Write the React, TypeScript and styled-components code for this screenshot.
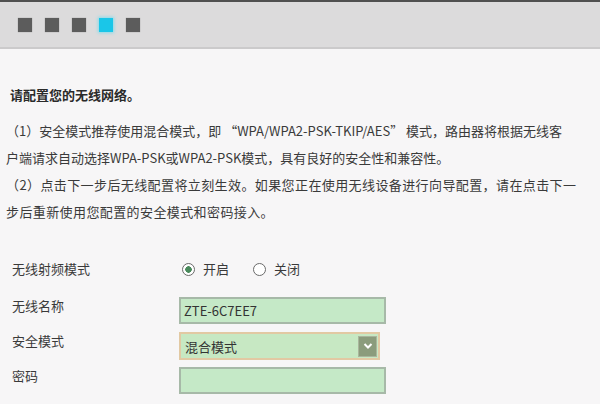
import React from 'react';
import styled, {createGlobalStyle} from 'styled-components';

const steps = [false, false, false, true, false];

const intro = [
	'（1）安全模式推荐使用混合模式，即 “WPA/WPA2-PSK-TKIP/AES” 模式，路由器将根据无线客',
	'户端请求自动选择WPA-PSK或WPA2-PSK模式，具有良好的安全性和兼容性。',
	'（2）点击下一步后无线配置将立刻生效。如果您正在使用无线设备进行向导配置，请在点击下一',
	'步后重新使用您配置的安全模式和密码接入。',
];

function Radio({checked, label}: {checked?: boolean; label: string}) {
	return (
		<RadioItem>
			<RadioDot checked={checked} />
			<span>{label}</span>
		</RadioItem>
	);
}

function App() {
	return (
		<>
			<GlobalStyle />
			<Page>
				<Header>
					{steps.map((active, i) => (
						<Step key={i} active={active} />
					))}
				</Header>
				<Content>
					<Heading>请配置您的无线网络。</Heading>
					<Intro>
						{intro.map((line, i) => (
							<Line key={i} wide={i > 1}>
								{line}
							</Line>
						))}
					</Intro>
					<Form>
						<Row height={24} gap={13}>
							<Label>无线射频模式</Label>
							<RadioGroup>
								<Radio checked label="开启" />
								<Radio label="关闭" />
							</RadioGroup>
						</Row>
						<Row height={27} gap={8}>
							<Label>无线名称</Label>
							<Input defaultValue="ZTE-6C7EE7" />
						</Row>
						<Row height={28} gap={7}>
							<Label>安全模式</Label>
							<Select>
								<span>混合模式</span>
								<DropButton>
									<svg width="10" height="8" viewBox="0 0 10 8">
										<path
											d="M1.5 2 L5 5.5 L8.5 2"
											fill="none"
											stroke="#fff"
											strokeWidth="2"
										/>
									</svg>
								</DropButton>
							</Select>
						</Row>
						<Row height={28} gap={0}>
							<Label>密码</Label>
							<Input type="password" />
						</Row>
					</Form>
				</Content>
			</Page>
		</>
	);
}

export default App;

const GlobalStyle = createGlobalStyle`
	body {
		margin: 0;
		background: #f7f6f7;
		font-family: "Noto Sans CJK SC", "Noto Sans", sans-serif;
		color: #3a3a3a;
	}
`;

const Page = styled.div`
	width: 600px;
	height: 404px;
	overflow: hidden;
	background: #f7f6f7;
`;

const Header = styled.div`
	display: flex;
	align-items: center;
	gap: 13px;
	height: 45px;
	padding-left: 18px;
	border-top: 2px solid #505050;
	border-bottom: 2px solid #cbcacb;
	background: #dcdbdc;
`;

const Step = styled.div<{active: boolean}>`
	width: 14px;
	height: 14px;
	background: ${(p) => (p.active ? '#1ac6e8' : '#5c5c5c')};
	box-shadow: ${(p) =>
		p.active ? '0 0 3px 1px rgba(80, 220, 245, 0.6)' : '0 0 1px #8a8a8a'};
`;

const Content = styled.div`
	padding: 36px 10px 0;
	font-size: 13px;
`;

const Heading = styled.div`
	font-weight: bold;
	line-height: 20px;
	color: #2a2a2a;
`;

const Intro = styled.div`
	margin-top: 12px;
	margin-left: -4px;
`;

const Line = styled.div<{wide: boolean}>`
	line-height: 27px;
	white-space: nowrap;
	letter-spacing: ${(p) => (p.wide ? '0.4px' : '0')};
`;

const Form = styled.div`
	display: flex;
	flex-direction: column;
	margin-top: 35px;
	padding-left: 2px;
`;

const Row = styled.div<{height: number; gap: number}>`
	display: flex;
	align-items: flex-start;
	height: ${(p) => p.height}px;
	margin-bottom: ${(p) => p.gap}px;
`;

const Label = styled.div`
	width: 167px;
	line-height: 16px;
	padding-top: 1px;
`;

const RadioGroup = styled.div`
	display: flex;
	align-items: center;
	gap: 24px;
	margin-left: 3px;
	line-height: 16px;
	padding-top: 1px;
`;

const RadioItem = styled.label`
	display: flex;
	align-items: center;
	gap: 8px;
`;

const RadioDot = styled.span<{checked?: boolean}>`
	box-sizing: border-box;
	width: 13px;
	height: 13px;
	border-radius: 50%;
	border: 1px solid #6a6a6a;
	background: ${(p) =>
		p.checked
			? 'radial-gradient(circle, #4a8a5c 0 3px, #fff 3.5px)'
			: '#fff'};
`;

const Input = styled.input`
	box-sizing: border-box;
	width: 207px;
	height: 27px;
	padding: 0 3px;
	border: 2px solid #a7b9a8;
	background: #c5e9c7;
	font-family: "Noto Sans CJK SC", "Noto Sans", sans-serif;
	font-size: 13px;
	color: #333;
	outline: none;
`;

const Select = styled.div`
	box-sizing: border-box;
	display: flex;
	align-items: center;
	justify-content: space-between;
	width: 201px;
	height: 28px;
	padding: 0 1px 0 4px;
	border: 2px solid #e2c9a3;
	background: #c7e8c3;
	color: #333;
`;

const DropButton = styled.div`
	display: flex;
	align-items: center;
	justify-content: center;
	width: 19px;
	height: 21px;
	background: #8b9c7c;
	border: 1px solid #a9b59c;
	box-sizing: border-box;
`;
